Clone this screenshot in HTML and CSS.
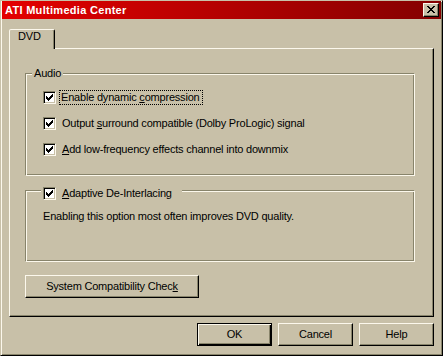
FILE: index.html
```html
<!DOCTYPE html>
<html>
<head>
<meta charset="utf-8">
<link rel="stylesheet" href="styles.css">
</head>
<body>
<div class="window">
  <div class="titlebar">
    <span class="title">ATI Multimedia Center</span>
    <span class="close">
      <svg width="8" height="7" viewBox="0 0 8 7" shape-rendering="crispEdges"><path d="M0 0h2v1H0zM6 0h2v1H6zM1 1h2v1H1zM5 1h2v1H5zM2 2h4v1H2zM3 3h2v1H3zM2 4h4v1H2zM1 5h2v1H1zM5 5h2v1H5zM0 6h2v1H0zM6 6h2v1H6z" fill="#000"/></svg>
    </span>
  </div>
  <div class="content">
    <div class="tabs"><div class="tab">DVD</div></div>
    <div class="panel">
      <div class="group audio">
        <span class="legend">Audio</span>
        <div class="check"><span class="box"><svg width="7" height="7" viewBox="0 0 7 7" shape-rendering="crispEdges"><path d="M6 0h1v1H6zM5 1h2v1H5zM0 2h1v1H0zM4 2h3v1H4zM0 3h2v1H0zM3 3h3v1H3zM0 4h5v1H0zM1 5h3v1H1zM2 6h1v1H2z" fill="#000"/></svg></span><span class="lbl focus">Enable dynamic <u>c</u>ompression</span></div>
        <div class="check"><span class="box"><svg width="7" height="7" viewBox="0 0 7 7" shape-rendering="crispEdges"><path d="M6 0h1v1H6zM5 1h2v1H5zM0 2h1v1H0zM4 2h3v1H4zM0 3h2v1H0zM3 3h3v1H3zM0 4h5v1H0zM1 5h3v1H1zM2 6h1v1H2z" fill="#000"/></svg></span><span class="lbl">Output <u>s</u>urround compatible (Dolby ProLogic) signal</span></div>
        <div class="check"><span class="box"><svg width="7" height="7" viewBox="0 0 7 7" shape-rendering="crispEdges"><path d="M6 0h1v1H6zM5 1h2v1H5zM0 2h1v1H0zM4 2h3v1H4zM0 3h2v1H0zM3 3h3v1H3zM0 4h5v1H0zM1 5h3v1H1zM2 6h1v1H2z" fill="#000"/></svg></span><span class="lbl"><u>A</u>dd low-frequency effects channel into downmix</span></div>
      </div>
      <div class="group deint">
        <div class="check legend2"><span class="box"><svg width="7" height="7" viewBox="0 0 7 7" shape-rendering="crispEdges"><path d="M6 0h1v1H6zM5 1h2v1H5zM0 2h1v1H0zM4 2h3v1H4zM0 3h2v1H0zM3 3h3v1H3zM0 4h5v1H0zM1 5h3v1H1zM2 6h1v1H2z" fill="#000"/></svg></span><span class="lbl"><u>A</u>daptive De-Interlacing</span></div>
        <p class="desc">Enabling this option most often improves DVD quality.</p>
      </div>
      <div class="btn sys">System Compatibility Chec<u>k</u></div>
    </div>
    <div class="footer">
      <div class="btn default">OK</div>
      <div class="btn">Cancel</div>
      <div class="btn">Help</div>
    </div>
  </div>
</div>
</body>
</html>
```
FILE: styles.css
```css
* { box-sizing: border-box; }
html, body { margin: 0; padding: 0; }
body {
  width: 443px;
  height: 356px;
  background: #c8c0a8;
  font-family: "Liberation Sans", Arial, sans-serif;
  font-size: 11px;
  line-height: 13px;
  color: #000;
  letter-spacing: -0.2px;
  overflow: hidden;
}
.window {
  width: 443px;
  height: 356px;
  border: 1px solid;
  border-color: #c8c0a8 #000 #000 #c8c0a8;
  box-shadow: inset 1px 1px 0 #fcf8ec, inset -1px -1px 0 #88846b;
  padding: 0 1px 1px 1px;
  display: flex;
  flex-direction: column;
}
.titlebar {
  height: 18px;
  background: linear-gradient(to right, #e40000, #840000);
  display: flex;
  align-items: center;
  padding: 0 2px 0 3px;
}
.title {
  flex: 1;
  color: #fff;
  font-weight: bold;
  letter-spacing: 0.3px;
}
.close {
  width: 16px;
  height: 14px;
  background: #c8c0a8;
  border: 1px solid;
  border-color: #fcf8ec #000 #000 #fcf8ec;
  box-shadow: inset -1px -1px 0 #88846b;
  display: flex;
  align-items: center;
  justify-content: center;
  padding: 0 1px 1px 0;
}
.close svg { display: block; }
.content {
  flex: 1;
  padding: 10px 7px 0 7px;
  display: flex;
  flex-direction: column;
}
.tabs { display: flex; height: 19px; }
.tab {
  position: relative;
  z-index: 1;
  width: 46px;
  height: 20px;
  background: #c8c0a8;
  border: 1px solid;
  border-bottom: none;
  border-color: #fcf8ec #000 transparent #fcf8ec;
  border-radius: 2px 2px 0 0;
  box-shadow: inset -1px 0 0 #88846b;
  padding: 0 0 0 8px;
}
.panel {
  height: 269px;
  border: 1px solid;
  border-color: #fcf8ec #000 #000 #fcf8ec;
  box-shadow: inset -1px -1px 0 #88846b;
  padding: 24px 18px 0 15px;
  display: flex;
  flex-direction: column;
}
.group {
  position: relative;
  border: 1px solid;
  border-color: #88846b #fcf8ec #fcf8ec #88846b;
  box-shadow: inset 1px 1px 0 #fcf8ec, inset -1px -1px 0 #88846b;
}
.group.audio {
  height: 103px;
  padding: 17px 0 0 17px;
  display: flex;
  flex-direction: column;
  gap: 13px;
}
.group.deint {
  height: 72px;
  margin-top: 14px;
  padding: 19px 0 0 17px;
}
.legend {
  position: absolute;
  top: -7px;
  left: 6px;
  background: #c8c0a8;
  padding: 0 2px;
}
.legend2 {
  position: absolute;
  top: -4px;
  left: 15px;
  background: #c8c0a8;
  padding: 0 9px 0 2px;
}
.check {
  display: flex;
  align-items: center;
  height: 13px;
}
.box {
  width: 13px;
  height: 13px;
  flex: none;
  background: #fff;
  border: 1px solid;
  border-color: #88846b #fcf8ec #fcf8ec #88846b;
  box-shadow: inset 1px 1px 0 #000, inset -1px -1px 0 #c8c0a8;
  padding: 2px 0 0 2px;
}
.box svg { display: block; }
.lbl {
  margin-left: 5px;
  padding: 0 1px;
  white-space: nowrap;
}
.focus {
  outline: 1px dotted #000;
  outline-offset: 0;
  margin-left: 4px;
  padding: 0 2px 0 1px;
}
.desc {
  margin: 0;
}
.btn {
  height: 23px;
  width: 75px;
  border: 1px solid;
  border-color: #fcf8ec #000 #000 #fcf8ec;
  box-shadow: inset -1px -1px 0 #88846b;
  display: flex;
  align-items: center;
  justify-content: center;
  padding-bottom: 1px;
}
.btn.sys {
  width: 174px;
  margin-top: 13px;
}
.btn.default {
  border-color: #000;
  box-shadow: inset 1px 1px 0 #fcf8ec, inset -1px -1px 0 #000, inset -2px -2px 0 #88846b;
}
.footer {
  margin-top: 6px;
  display: flex;
  justify-content: flex-end;
  gap: 6px;
}
```
